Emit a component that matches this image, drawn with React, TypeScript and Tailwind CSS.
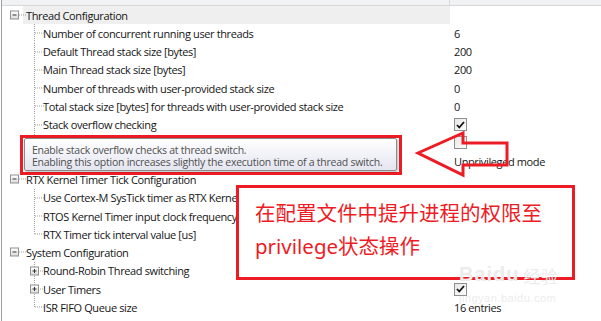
import React from 'react';

type Row = {
  label: string;
  level: 0 | 1;
  expander?: 'minus' | 'plus';
  highlight?: boolean;
  value?: string;
  check?: boolean;
  last?: boolean;
};

const rows: Row[] = [
  { label: 'Thread Configuration', level: 0, expander: 'minus', highlight: true },
  { label: 'Number of concurrent running user threads', level: 1, value: '6' },
  { label: 'Default Thread stack size [bytes]', level: 1, value: '200' },
  { label: 'Main Thread stack size [bytes]', level: 1, value: '200' },
  { label: 'Number of threads with user-provided stack size', level: 1, value: '0' },
  { label: 'Total stack size [bytes] for threads with user-provided stack size', level: 1, value: '0' },
  { label: 'Stack overflow checking', level: 1, check: true },
  { label: 'Stack usage watermark', level: 1, check: false },
  { label: 'Processor mode for thread execution', level: 1, value: 'Unprivileged mode', last: true },
  { label: 'RTX Kernel Timer Tick Configuration', level: 0, expander: 'minus' },
  { label: 'Use Cortex-M SysTick timer as RTX Kernel Timer', level: 1, check: true },
  { label: 'RTOS Kernel Timer input clock frequency [Hz]', level: 1, value: '12000000' },
  { label: 'RTX Timer tick interval value [us]', level: 1, value: '1000', last: true },
  { label: 'System Configuration', level: 0, expander: 'minus' },
  { label: 'Round-Robin Thread switching', level: 1, expander: 'plus', check: true },
  { label: 'User Timers', level: 1, expander: 'plus', check: true },
  { label: 'ISR FIFO Queue size', level: 1, value: '16 entries', last: true },
];

const ExpandBox = ({ cx, kind }: { cx: number; kind: 'minus' | 'plus' }) => (
  <g>
    <defs>
      <linearGradient id="boxg" x1="0" y1="0" x2="0" y2="1">
        <stop offset="0" stopColor="#ffffff" />
        <stop offset="1" stopColor="#dcdcdc" />
      </linearGradient>
    </defs>
    <rect x={cx - 4} y={5} width={8} height={8} fill="url(#boxg)" stroke="#919191" strokeWidth={1} />
    <line x1={cx - 2} y1={9} x2={cx + 2} y2={9} stroke="#333" strokeWidth={1} />
    {kind === 'plus' && <line x1={cx} y1={7} x2={cx} y2={11} stroke="#333" strokeWidth={1} />}
  </g>
);

// tree connector lines drawn in the gutter of each row
const Gutter = ({ row }: { row: Row }) => (
  <svg className="absolute left-0 top-0 h-full w-[43px]" viewBox="0 0 43 18.27" preserveAspectRatio="none">
    {row.level === 0 ? (
      <>
        <line x1={17} y1={9} x2={24} y2={9} stroke="#a0a0a0" strokeDasharray="1 1" />
        <ExpandBox cx={12.5} kind={row.expander ?? 'minus'} />
      </>
    ) : (
      <>
        <line x1={32.5} y1={0} x2={32.5} y2={row.last ? 9 : 18.27} stroke="#a0a0a0" strokeDasharray="1 1" />
        <line x1={row.expander ? 36 : 33} y1={9} x2={42} y2={9} stroke="#a0a0a0" strokeDasharray="1 1" />
        {row.expander && <ExpandBox cx={32.5} kind={row.expander} />}
      </>
    )}
  </svg>
);

const CheckBox = ({ checked }: { checked: boolean }) => (
  <div className="w-[13px] h-[13px] border border-[#8e8f8f] bg-gradient-to-br from-[#e6e6e6] to-white flex items-center justify-center">
    {checked && (
      <svg width="9" height="8" viewBox="0 0 9 8">
        <path d="M1 4 L3.3 6.5 L8 1" fill="none" stroke="#111" strokeWidth="1.8" />
      </svg>
    )}
  </div>
);

export default function App() {
  return (
    <div className="relative w-[601px] h-[321px] overflow-hidden bg-white text-[#151515] font-['Open_Sans','Liberation_Sans',sans-serif] text-[11px] tracking-[-0.38px]">
      <div className="ml-[1px] h-full border-l border-[#9e9e9e]">
        {/* column header strip */}
        <div className="flex h-[6px] bg-[#f1f2f4] border-b border-[#d8d8d8]">
          <div className="w-[448px] border-r border-[#d8d8d8]" />
        </div>

        {rows.map((row, i) => (
          <div key={i} className="relative flex h-[18.27px] items-center">
            <Gutter row={row} />
            <div
              className={`flex h-full items-center ${
                row.level === 0 ? 'ml-[21px] w-[427px] pl-[3px]' : 'ml-[41px] w-[407px]'
              } ${row.highlight ? 'bg-[#efefef]' : ''}`}
            >
              <span className="whitespace-nowrap leading-none">{row.label}</span>
            </div>
            <div className="pl-[4px] flex items-center">
              {row.check !== undefined ? (
                <CheckBox checked={row.check} />
              ) : (
                <span className="whitespace-nowrap leading-none">{row.value}</span>
              )}
            </div>
          </div>
        ))}
      </div>

      {/* tooltip with red highlight frame */}
      <div className="absolute left-[20px] top-[135px] w-[382px] h-[40px] border-[3px] border-[#ed1c24] bg-white">
        <div className="ml-[1px] w-[373px] h-[33px] rounded-[2px] border border-[#8a8a8a] bg-gradient-to-b from-white to-[#e4e5f0] pl-[7px] pt-[5px] text-[#4f4f4f] text-[10.5px] tracking-[-0.25px] leading-[12px] shadow-[1px_1px_2px_rgba(0,0,0,0.25)]">
          <div className="whitespace-nowrap">Enable stack overflow checks at thread switch.</div>
          <div className="whitespace-nowrap">Enabling this option increases slightly the execution time of a thread switch.</div>
        </div>
      </div>

      {/* hollow red arrow */}
      <svg className="absolute left-0 top-0" width="601" height="321" viewBox="0 0 601 321">
        <path
          d="M418 153 L463 133 L463 143 L507 143 L507 165 L463 165 L463 175 Z"
          fill="none"
          stroke="#ed1c24"
          strokeWidth="3"
          strokeLinejoin="miter"
        />
      </svg>

      {/* annotation box */}
      <div className="absolute left-[236px] top-[185px] w-[339px] h-[95px] border-[3px] border-[#ed1c24] bg-white pl-[16px] pt-[9px] text-[#ed1c24] text-[20.5px] leading-[33px] tracking-normal font-['Noto_Sans','Noto_Sans_CJK_SC',sans-serif]">
        <div className="whitespace-nowrap">在配置文件中提升进程的权限至</div>
        <div className="whitespace-nowrap">privilege状态操作</div>
      </div>

      {/* faint site watermark */}
      <div className="absolute left-[459px] top-[264px] text-[#ececec] tracking-normal font-['Liberation_Sans',sans-serif] pointer-events-none">
        <div className="flex items-end leading-none">
          <span className="text-[20px] font-bold tracking-[1px]">Baidu</span>
          <span className="ml-[4px] text-[17px] font-['Noto_Sans_CJK_SC',sans-serif]">经验</span>
        </div>
        <div className="mt-[9px] text-[11px] leading-none tracking-[0.5px]">jingyan.baidu.com</div>
      </div>
    </div>
  );
}
